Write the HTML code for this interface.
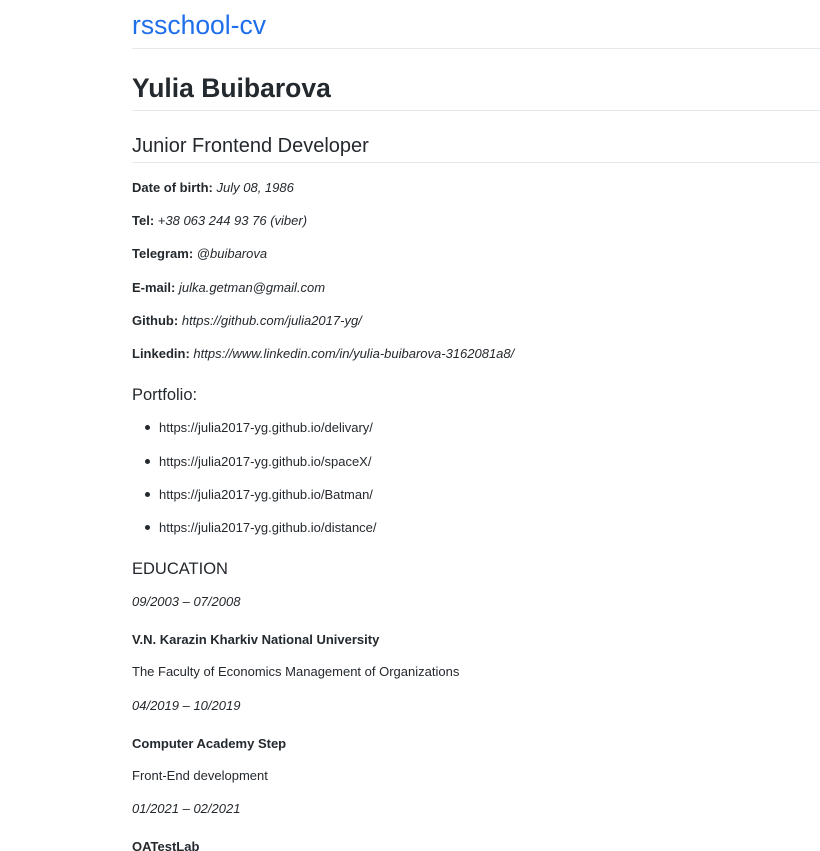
<!DOCTYPE html>
<html><head><meta charset="utf-8"><style>
html,body{margin:0;padding:0;background:#fff;width:820px;height:851px;overflow:hidden;position:relative}
body{font-family:"Liberation Sans",Arial,sans-serif;color:#24292e}
.l{position:absolute;left:132px;white-space:nowrap;height:20px;line-height:20px;font-size:13px}
.hr{position:absolute;left:132px;right:0;height:1px;background:#e6e8eb}
.h1{font-size:26.5px;height:32px;line-height:32px}
.h2{font-size:20px;height:26px;line-height:26px}
.h3{font-size:16.5px;height:24px;line-height:24px}
b{font-weight:bold}
i{font-style:italic}
.li{left:159px}
.dot{position:absolute;left:145px;width:5px;height:5px;border-radius:50%;background:#24292e}
</style></head><body>
<div class="l h1" style="top:9px;color:#1f6feb">rsschool-cv</div>
<div class="hr" style="top:48px"></div>
<div class="l h1" style="top:72px;font-weight:bold">Yulia Buibarova</div>
<div class="hr" style="top:110px"></div>
<div class="l h2" style="top:133px">Junior Frontend Developer</div>
<div class="hr" style="top:162px"></div>
<div class="l" style="top:178px"><b>Date of birth:</b> <i>July 08, 1986</i></div>
<div class="l" style="top:211px"><b>Tel:</b> <i>+38 063 244 93 76 (viber)</i></div>
<div class="l" style="top:244px"><b>Telegram:</b> <i>@buibarova</i></div>
<div class="l" style="top:278px"><b>E-mail:</b> <i>julka.getman@gmail.com</i></div>
<div class="l" style="top:311px"><b>Github:</b> <i>https://github.com/julia2017-yg/</i></div>
<div class="l" style="top:344px"><b>Linkedin:</b> <i>https://www.linkedin.com/in/yulia-buibarova-3162081a8/</i></div>
<div class="l h3" style="top:383px">Portfolio:</div>
<div class="dot" style="top:425px"></div><div class="l li" style="top:418px">https://julia2017-yg.github.io/delivary/</div>
<div class="dot" style="top:459px"></div><div class="l li" style="top:452px">https://julia2017-yg.github.io/spaceX/</div>
<div class="dot" style="top:492px"></div><div class="l li" style="top:485px">https://julia2017-yg.github.io/Batman/</div>
<div class="dot" style="top:525px"></div><div class="l li" style="top:518px">https://julia2017-yg.github.io/distance/</div>
<div class="l h3" style="top:557px">EDUCATION</div>
<div class="l" style="top:592px"><i>09/2003 – 07/2008</i></div>
<div class="l" style="top:630px"><b>V.N. Karazin Kharkiv National University</b></div>
<div class="l" style="top:662px">The Faculty of Economics Management of Organizations</div>
<div class="l" style="top:696px"><i>04/2019 – 10/2019</i></div>
<div class="l" style="top:734px"><b>Computer Academy Step</b></div>
<div class="l" style="top:766px">Front-End development</div>
<div class="l" style="top:799px"><i>01/2021 – 02/2021</i></div>
<div class="l" style="top:837px"><b>QATestLab</b></div>
</body></html>
